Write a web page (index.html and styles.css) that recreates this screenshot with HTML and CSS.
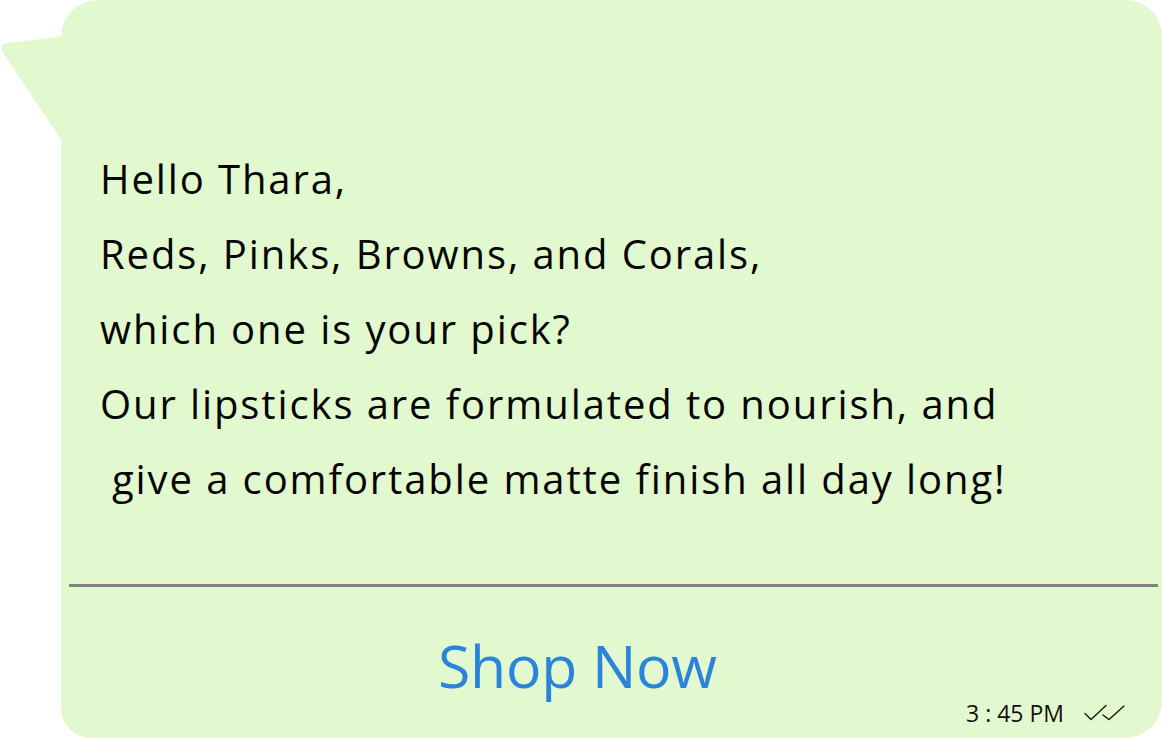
FILE: index.html
```html
<!DOCTYPE html>
<html>
<head>
<meta charset="utf-8">
<link rel="stylesheet" href="styles.css">
</head>
<body>
<div class="chat">
  <svg class="tail" width="61" height="141" viewBox="0 0 61 141">
    <path d="M62 36 L6 43.5 Q-1 45 2.5 52 L62 141 Z" fill="#e2f8ce"/>
  </svg>
  <div class="bubble">
    <div class="message">
      <p class="line">Hello Thara,</p>
      <p class="line">Reds, Pinks, Browns, and Corals,</p>
      <p class="line">which one is your pick?</p>
      <p class="line">Our lipsticks are formulated to nourish, and</p>
      <p class="line indent">give a comfortable matte finish all day long!</p>
    </div>
    <div class="divider"></div>
    <div class="footer">
      <a class="shop">Shop Now</a>
      <div class="meta">
        <span class="time">3 : 45 PM</span>
        <svg class="ticks" width="44" height="20" viewBox="0 0 44 20">
          <path d="M2 10.5 L8 16.5 L23 2.5 M20 12 L26 16.5 L41 3" fill="none" stroke="#1a1a1a" stroke-width="1.4" stroke-linecap="round" stroke-linejoin="miter"/>
        </svg>
      </div>
    </div>
  </div>
</div>
</body>
</html>
```
FILE: styles.css
```css
html, body {
  margin: 0;
  padding: 0;
  background: #ffffff;
}
.chat {
  display: flex;
  align-items: flex-start;
  width: 1162px;
  height: 738px;
}
.tail {
  flex: 0 0 61px;
  display: block;
}
.bubble {
  flex: 0 0 1101px;
  height: 738px;
  background: #e2f8ce;
  border-radius: 37px 36px 37px 30px;
  display: flex;
  flex-direction: column;
  box-sizing: border-box;
  padding-top: 141px;
}
.message {
  padding-left: 39px;
  font-family: "Open Sans", "DejaVu Sans", sans-serif;
  font-size: 40px;
  line-height: 75px;
  letter-spacing: 1.9px;
  color: #050505;
}
.line {
  margin: 0;
  white-space: pre;
}
.indent {
  padding-left: 12px;
}
.divider {
  margin: 68px 4px 0 8px;
  height: 3px;
  background: #808080;
}
.footer {
  flex: 1;
  display: flex;
  align-items: flex-start;
  padding-left: 377px;
  padding-right: 35px;
}
.shop {
  margin-top: 48px;
  font-family: "Open Sans", "DejaVu Sans", sans-serif;
  font-size: 59px;
  line-height: 60px;
  letter-spacing: -0.3px;
  color: #2b84dc;
}
.meta {
  margin-left: auto;
  align-self: flex-end;
  margin-bottom: 13px;
  display: flex;
  align-items: center;
  gap: 19px;
}
.time {
  font-family: "Open Sans", "DejaVu Sans", sans-serif;
  font-size: 23px;
  line-height: 24px;
  color: #111111;
}
.ticks {
  display: block;
}
```
